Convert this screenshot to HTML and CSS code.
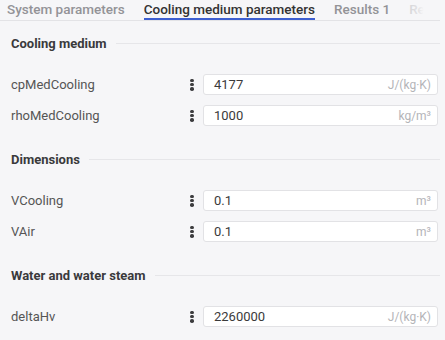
FILE: index.html
```html
<!DOCTYPE html>
<html lang="en">
<head>
    <meta charset="UTF-8">
    <meta name="viewport" content="width=device-width, initial-scale=1.0">
    <title>Cooling medium parameters</title>
    <link rel="stylesheet" href="styles.css">
</head>
<body>
    <div class="tabs">
        <div class="tab">System parameters</div>
        <div class="tab active">Cooling medium parameters</div>
        <div class="tab">Results 1</div>
        <div class="tab">Results 2</div>
        <div class="tabs-fade"></div>
    </div>

    <div class="content">
        <div class="section">
            <div class="section-title"><span>Cooling medium</span></div>
            <div class="param-row">
                <div class="param-label">cpMedCooling</div>
                <div class="param-menu"><i></i><i></i><i></i></div>
                <div class="param-input">
                    <span class="param-value">4177</span>
                    <span class="param-unit">J/(kg·K)</span>
                </div>
            </div>
            <div class="param-row">
                <div class="param-label">rhoMedCooling</div>
                <div class="param-menu"><i></i><i></i><i></i></div>
                <div class="param-input">
                    <span class="param-value">1000</span>
                    <span class="param-unit">kg/m³</span>
                </div>
            </div>
        </div>

        <div class="section">
            <div class="section-title"><span>Dimensions</span></div>
            <div class="param-row">
                <div class="param-label">VCooling</div>
                <div class="param-menu"><i></i><i></i><i></i></div>
                <div class="param-input">
                    <span class="param-value">0.1</span>
                    <span class="param-unit">m³</span>
                </div>
            </div>
            <div class="param-row">
                <div class="param-label">VAir</div>
                <div class="param-menu"><i></i><i></i><i></i></div>
                <div class="param-input">
                    <span class="param-value">0.1</span>
                    <span class="param-unit">m³</span>
                </div>
            </div>
        </div>

        <div class="section">
            <div class="section-title"><span>Water and water steam</span></div>
            <div class="param-row">
                <div class="param-label">deltaHv</div>
                <div class="param-menu"><i></i><i></i><i></i></div>
                <div class="param-input">
                    <span class="param-value">2260000</span>
                    <span class="param-unit">J/(kg·K)</span>
                </div>
            </div>
        </div>
    </div>
</body>
</html>
```

FILE: styles.css
```css
body {
    margin: 0;
    padding: 0;
    font-family: Roboto, 'Noto Sans', sans-serif;
    font-size: 13px;
    background: #f6f6f8;
    color: #333;
    overflow: hidden;
}

.tabs {
    position: relative;
    display: flex;
    gap: 19px;
    height: 20px;
    margin: 0 5px 0 0;
    padding-left: 7px;
    border-bottom: 1px solid #e3e3e6;
    overflow: hidden;
    white-space: nowrap;
}

.tab {
    font-size: 13.5px;
    font-weight: 500;
    color: #939397;
    line-height: 19px;
    border-bottom: 2px solid transparent;
    flex-shrink: 0;
}

.tab.active {
    color: #333;
    border-bottom-color: #3d5fd0;
}

.tabs-fade {
    position: absolute;
    top: 0;
    right: 0;
    width: 36px;
    height: 19px;
    background: linear-gradient(90deg, rgba(246, 246, 248, 0.6) 0%, rgba(246, 246, 248, 0.8) 40%, #f6f6f8 55%);
}

.content {
    padding: 12px 5px 0 11px;
}

.section {
    margin-bottom: 23px;
}

.section-title {
    display: flex;
    align-items: center;
    gap: 9px;
    height: 20px;
    margin-bottom: 21px;
    font-weight: 700;
    color: #3a3a3c;
}

.section-title::after {
    content: '';
    flex: 1;
    height: 1px;
    background: #e6e6e9;
}

.param-row {
    display: flex;
    align-items: center;
    height: 21px;
    margin-bottom: 10px;
}

.param-label {
    width: 179px;
    color: #555;
}

.param-menu {
    display: flex;
    flex-direction: column;
    justify-content: space-between;
    width: 4px;
    height: 12px;
    margin-right: 9px;
}

.param-menu i {
    display: block;
    width: 3.5px;
    height: 3.5px;
    border-radius: 50%;
    background: #3c3c3e;
}

.param-input {
    flex: 1;
    display: flex;
    justify-content: space-between;
    align-items: center;
    height: 21px;
    margin-right: 2px;
    padding: 0 6px 0 10px;
    background: #fff;
    border: 1px solid #e2e2e5;
    border-radius: 3px;
    box-sizing: border-box;
}

.param-value {
    color: #3a3a3a;
}

.param-unit {
    font-size: 12px;
    color: #b4b4b8;
}
```
